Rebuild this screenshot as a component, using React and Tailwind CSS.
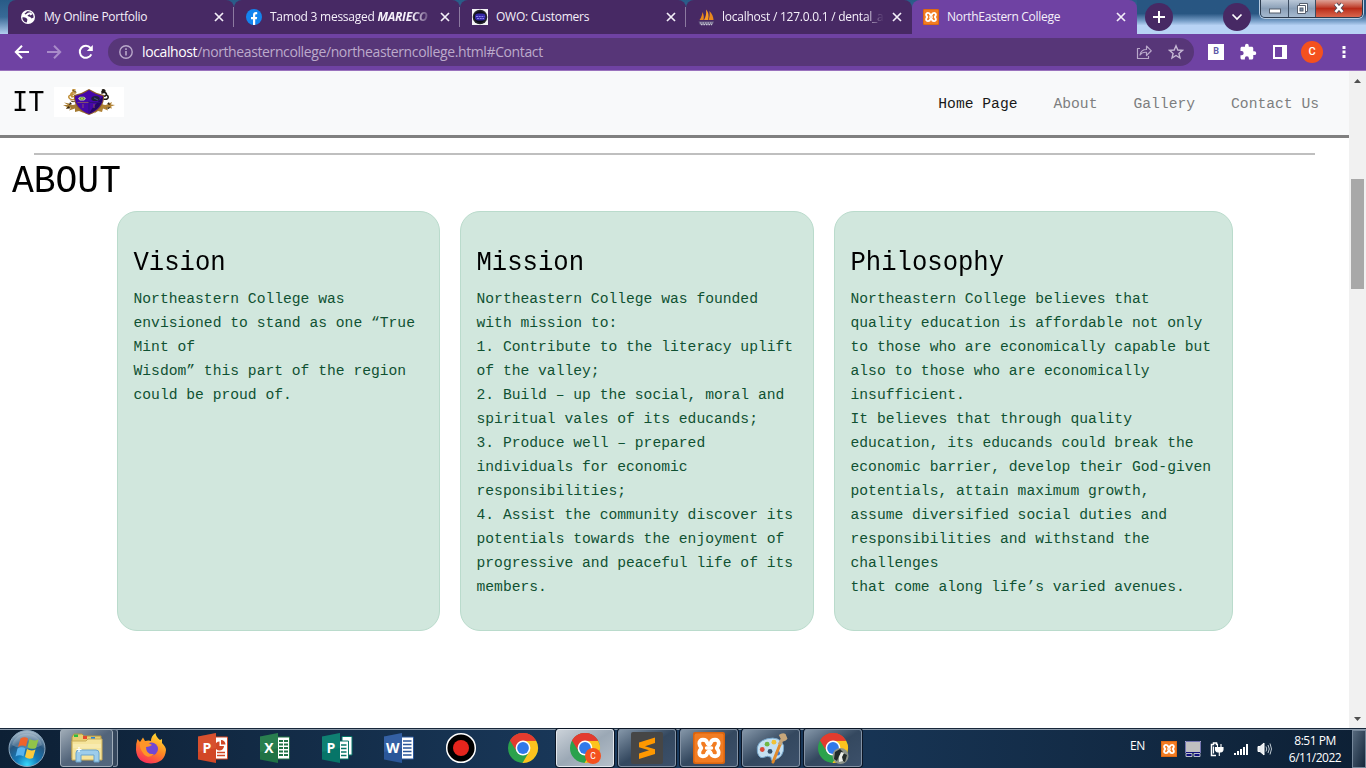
import React from "react";

const ui = "font-['Open_Sans','Noto_Sans',sans-serif]";
const mono = "font-['Liberation_Mono','DejaVu_Sans_Mono',monospace]";

function Xampp({ className, r = 2 }) {
  return (
    <svg viewBox="0 0 32 32" className={className}>
      <rect width="32" height="32" rx={r} fill="#d9640f" />
      <rect x="1.5" y="1.5" width="29" height="29" rx={r} fill="#f27c22" />
      <g fill="none" stroke="#fff" strokeLinejoin="round" strokeLinecap="round">
        <path
          d="M14.500 11.500 C13.500 6.500 6 6.500 6.300 11.500 C6.500 14.500 8.300 15 8.300 16 C8.300 17 6.500 17.500 6.300 20.500 C6 25.500 13.500 25.500 14.500 20.500"
          strokeWidth="3.800"
        />
        <path
          d="M17.500 11.500 C18.500 6.500 26 6.500 25.700 11.500 C25.500 14.500 23.700 15 23.700 16 C23.700 17 25.500 17.500 25.700 20.500 C26 25.500 18.500 25.500 17.500 20.500"
          strokeWidth="3.800"
        />
        <path d="M14.500 11.500 L16 13 L17.500 11.500 M14.500 20.500 L16 19 L17.500 20.500" strokeWidth="3.400" />
        <path d="M13.500 16 H18.500" strokeWidth="3.400" />
      </g>
    </svg>
  );
}

function Chrome({ className, children }) {
  return (
    <svg viewBox="0 0 32 32" className={className}>
      <circle cx="16" cy="16" r="15" fill="#2ba24c" />
      <path d="M16 16 L3 8.500 A15 15 0 0 1 29 8.500 Z" fill="#e33b2e" />
      <path d="M16 8.700 H29.100 A15 15 0 0 1 15.500 31 L22.300 19.600 Z" fill="#fcc31e" />
      <path d="M3 8.500 A15 15 0 0 1 29.100 8.700 H16 L9.700 19.600 Z" fill="#e33b2e" />
      <circle cx="16" cy="16" r="7.400" fill="#fff" />
      <circle cx="16" cy="16" r="5.900" fill="#3079ea" />
      {children}
    </svg>
  );
}

function Globe() {
  return (
    <svg viewBox="0 0 16 16" className="size-4">
      <circle cx="8" cy="8" r="7" fill="#fff" />
      <path d="M2.300 8.500 C5 8 7 9 7.500 11 C6.500 12 7.500 13 6.500 13.600 C4 13 2.300 11 2.300 8.500Z M7 2.400 C9.500 2 11.500 3 12.800 5 L10.500 6.500 L9.500 5.200 L7.500 6.500 C8 8 11 7.500 11.500 9.500 L13.600 8.600 C13.500 7 13.400 6.500 12.800 5 L10.400 3.300 L8 3.800 L5.500 5.500 L4.500 4.700Z" fill="#472964" />
    </svg>
  );
}

function Facebook() {
  return (
    <svg viewBox="0 0 16 16" className="size-4">
      <circle cx="8" cy="8" r="8" fill="#1484ee" />
      <path d="M7 16 V10.200 H5 V7.900 H7 V6.300 C7 4.200 8.200 3.100 10.200 3.100 L11.200 3.200 V5.200 H10.200 C9.500 5.200 9.200 5.600 9.200 6.200 V7.900 H11.200 L10.800 10.200 H9.200 V16Z" fill="#fff" />
    </svg>
  );
}

function Owo() {
  return (
    <svg viewBox="0 0 16 16" className="size-4">
      <rect width="16" height="16" fill="#f4f4f6" />
      <circle cx="8" cy="8" r="7.300" fill="#24242b" />
      <circle cx="8" cy="8" r="5.800" fill="#0c0b18" />
      <rect x="3" y="4.500" width="10.500" height="7" rx="3" fill="#3427a8" />
      <path d="M4 7.500 H12.500 M5 9.500 H12" stroke="#8b80e8" strokeWidth="1" strokeDasharray="2 .7" />
    </svg>
  );
}

function PhpMyAdmin() {
  return (
    <svg viewBox="0 0 17 17" className="size-[17px]">
      <path d="M1.500 11 C3.500 8.500 4.300 5 4.500 3 C6 6 6 8.500 5.500 11Z" fill="#e8871c" />
      <path d="M6 11 C8 8 8.500 4 8 .5 C11 3.500 11 8 10 11Z" fill="#fb9b23" />
      <path d="M10.500 11 C11.700 8 12 5 11.300 2 C14 4.500 15.500 8 15.500 11Z" fill="#e8871c" />
      <path d="M.5 12.500 H16 L14.500 16 H2Z" fill="#6d6387" />
      <path d="M2 14 H15 M3 15.700 H14" stroke="#c9c3d6" strokeWidth="1.200" strokeDasharray="1.500 1" />
    </svg>
  );
}

function Close() {
  return (
    <svg viewBox="0 0 10 10" className="size-[10px] shrink-0">
      <path d="M1 1 L9 9 M9 1 L1 9" stroke="#f3eef8" strokeWidth="1.700" />
    </svg>
  );
}

function Tab({ icon, children, active, sep }) {
  const cls = active
    ? "bg-[#6f42a3] w-[225px] pl-[11px] pr-[11px]"
    : "bg-[#472964] w-[226px] pl-[12px] pr-[10px]";
  return (
    <div className={`flex h-full shrink-0 items-center rounded-t-lg ${cls}`}>
      <span className="flex w-[24px] shrink-0 items-center">{icon}</span>
      <span className={`flex-1 whitespace-nowrap text-[12px] leading-4 text-[#f5f0fa] ${active ? "tracking-[-0.3px]" : "tracking-[-0.25px]"}`}>
        {children}
      </span>
      <span className="ml-[8px] flex"><Close /></span>
      {sep && <span className="-mr-[10px] ml-[9px] h-5 w-px bg-[#8c7aa0]" />}
    </div>
  );
}

function Crest() {
  return (
    <svg viewBox="0 0 70 30" className="h-[30px] w-[70px] bg-white">
      <g fill="none" strokeLinecap="round">
        <path d="M21 9 C17 11 15 7 18.500 5.500 M21.500 6 C18 4.500 18 2 21 3 M21 12 C17 14 13 10.500 15.500 8.500 M20 7 C18 7 17 9 18 10" stroke="#c08f38" strokeWidth="1.500" />
        <path d="M21.500 14 C20 15 18 15 17 14 M22 5 L19 3.500" stroke="#5c4316" strokeWidth="1" />
        <path d="M48 9 C52 10 54 7 51 5.500 M48 6 C52 5 51 2 48.500 3 M49 12 C53 13 55.500 11 53.500 8.500 M48 4.500 L51 4" stroke="#1f1a14" strokeWidth="1.600" />
      </g>
      <path d="M22 17 Q18 19 15 16.500 L10 15.500 L14 18 L9 18 L13 20 L12 22 L17 20.500 L15 23.500 L21 21.500 L21 25 L25 24 L30 26 L24 18Z" fill="#a57a31" />
      <path d="M48 17 Q52 19 55 16.500 L58 15 L57 17.500 L61 18 L57 19.500 L58 21.500 L53 20.500 L54 23.500 L49 21.500 L48 25 L44 24 L40 26.500 L46 18Z" fill="#b08236" />
      <path d="M12 21.500 L15 19 L16 21.500Z M16 15 L18 17 L15 18Z M55 15 L56 18 L53 17Z M52 21 L56 20 L55 22Z" fill="#31230f" />
      <path d="M20 8 Q28 6.500 35 2 Q42 6.500 50 8 Q51 22 35 28 Q19 22 20 8Z" fill="#8b5a2a" />
      <path d="M21 9 Q29 7.500 35 3 Q41 7.500 49 9 Q49.500 21 35 27 Q20.500 21 21 9Z" fill="#4507a8" />
      <path d="M35 27 C42 23 48.500 19 49 9 Q45 14 42 17 Q38 21 35 27Z" fill="#250764" />
      <path d="M23.500 15.500 H35" stroke="#80506b" />
      <path d="M35 14 V26 M35 15.500 H46.500" stroke="#31107c" />
      <path d="M24 11.500 L26 9.700 H30 L32 11.500 L30 13.500 H26Z" fill="#c3c7a7" />
      <ellipse cx="28" cy="11.500" rx="2.500" ry="1.300" fill="#4fa53a" />
      <ellipse cx="28" cy="11.500" rx="1" ry=".7" fill="#d8c043" />
      <ellipse cx="41.500" cy="11.500" rx="4.200" ry="2.600" fill="#201f3b" />
      <path d="M40 11 L44 13" stroke="#46548a" />
      <path d="M29 17 V21 M40 17 V21" stroke="#8c4f67" strokeWidth="1" />
    </svg>
  );
}

function Card({ title, lines, className }) {
  return (
    <section className={`h-[420px] rounded-[20px] border border-[#badbcc] bg-[#d1e7dd] px-[15.500px] pt-[34px] ${className}`}>
      <h2 className="origin-[0_75%] scale-y-[1.07] text-[25.600px] leading-[35px] text-black">{title}</h2>
      <div className="mt-[6px] text-[14.660px] leading-6 text-[#0f5132]">
        {lines.map((l) => (
          <p key={l} className="whitespace-nowrap">{l}</p>
        ))}
      </div>
    </section>
  );
}

const vision = ["Northeastern College was", "envisioned to stand as one “True", "Mint of", "Wisdom” this part of the region", "could be proud of."];
const mission = [
  "Northeastern College was founded", "with mission to:", "1. Contribute to the literacy uplift", "of the valley;",
  "2. Build – up the social, moral and", "spiritual vales of its educands;", "3. Produce well – prepared", "individuals for economic",
  "responsibilities;", "4. Assist the community discover its", "potentials towards the enjoyment of", "progressive and peaceful life of its", "members.",
];
const philosophy = [
  "Northeastern College believes that", "quality education is affordable not only", "to those who are economically capable but",
  "also to those who are economically", "insufficient.", "It believes that through quality", "education, its educands could break the",
  "economic barrier, develop their God-given", "potentials, attain maximum growth,", "assume diversified social duties and",
  "responsibilities and withstand the", "challenges", "that come along life’s varied avenues.",
];

function Office({ color, dark, letter, children }) {
  return (
    <svg viewBox="0 0 32 32" className="size-8">
      {children}
      <path d="M1 4.500 L19 1 V31 L1 27.500Z" fill={color} />
      <path d="M1 4.500 L19 1 V16 L1 20Z" fill={dark} opacity=".25" />
      <text x="9.800" y="21" textAnchor="middle" fontSize="14" fontWeight="700" fontFamily="Open Sans" fill="#fff">{letter}</text>
    </svg>
  );
}

function Slot({ children, state }) {
  const cls =
    state === "active"
      ? "border-[#e3e8ee] bg-linear-to-br from-[#cbd2d9] via-[#9ba8b5] to-[#b5bfc9]"
      : state === "open"
      ? "border-[#8493a5] bg-linear-to-br from-[#8496a8] via-[#34485f] to-[#3c506a]"
      : "border-transparent";
  return (
    <div className="flex w-[62px] shrink-0 justify-center pb-px">
      <div className={`flex w-[58px] items-center justify-center rounded-[3px] border ${cls} ${state ? "shadow-[0_0_0_1px_#0a1525]" : ""}`}>{children}</div>
    </div>
  );
}

function Taskbar() {
  return (
    <footer className="flex h-10 border-t border-[#17273a] bg-linear-to-r from-[#0d2035] via-[#1b3c60] to-[#0d2035] shadow-[inset_0_1px_0_#8b9aaa]">
      <div className="flex w-[58px] shrink-0 items-center pl-[8px]">
        <svg viewBox="0 0 38 38" className="size-[38px]">
          <defs>
            <radialGradient id="orb" cx=".5" cy=".95" r=".9">
              <stop offset="0" stopColor="#36d9fb" /><stop offset=".35" stopColor="#1479b8" /><stop offset=".7" stopColor="#28577f" /><stop offset="1" stopColor="#a0b5c6" />
            </radialGradient>
          </defs>
          <circle cx="19" cy="18.500" r="18" fill="url(#orb)" stroke="#8ba7be" />
          <path d="M4 15 C8 0 30 0 34 15 C25 20 13 20 4 15" fill="#fff" opacity=".2" />
          <path d="M12.500 8.500 Q16.500 6 20 8.500 L18 16.500 Q14 14.500 10 17Z" fill="#ef632b" />
          <path d="M21.500 9 Q26 11.500 30.500 9.500 L28 18 Q24 20 19.500 17.300Z" fill="#91c449" />
          <path d="M9.500 18.500 Q13.500 16 17.500 18.500 L15.500 26.500 Q11.500 24 7.500 26.500Z" fill="#58b3ee" />
          <path d="M19 19 Q23 21.500 27.500 19.500 L25 28 Q21 30 17 27Z" fill="#fcca3d" />
        </svg>
      </div>
      <div className="flex w-[62px] shrink-0 pl-[2px] pb-px">
        <div className="flex w-[53px] items-center justify-center rounded-[3px] border border-[#a3afbb] bg-linear-to-br from-[#a0acb7] via-[#52647a] to-[#53677e]">
          <svg viewBox="0 0 34 32" className="h-8 w-[34px]">
            <path d="M2 5 L4 2 H12 L14 4 H31 V26 H2Z" fill="#e7ce72" stroke="#b49443" />
            <path d="M4 2.500 H8 V5 H4Z" fill="#2fbb42" /><path d="M13 4 H17 V7 H13Z" fill="#e5482e" /><path d="M21 5 H25 V8 H21Z" fill="#2683dc" />
            <path d="M2 9 H16 L18 7 H32 V28 H2Z" fill="#f5e49c" stroke="#c9ac58" />
            <path d="M3 13 H31 M3 15 H31" stroke="#faf0c1" />
            <path d="M6 30 V21 Q6 18 9 18 H26 Q29 18 29 21 V30 H24 V23 H11 V30Z" fill="#9dcdeb" stroke="#6aa3cc" />
            <path d="M9 15 V20 M6.500 17.500 H11.500" stroke="#fff" strokeWidth="1.200" />
          </svg>
        </div>
        <div className="w-[5px] rounded-r-[3px] border border-l-0 border-[#8493a5] bg-[#35475d]" />
      </div>
      <Slot>
        <svg viewBox="0 0 32 32" className="size-8">
          <defs>
            <linearGradient id="fox" x1=".8" y1="0" x2=".3" y2="1"><stop offset="0" stopColor="#ffe536" /><stop offset=".5" stopColor="#ff8a22" /><stop offset="1" stopColor="#f92b5b" /></linearGradient>
          </defs>
          <path d="M2.500 7 L5 10 L8 5.500 L10 9 Q14 8 16 9 Q16 4 20.500 1 Q21 5 25 8 L27 7 L27 11 Q31 15 31 18 Q30 31 16 31.500 Q2 31 1 18 Q.5 12 2.500 7Z" fill="url(#fox)" />
          <circle cx="16.500" cy="17" r="6.500" fill="#7148d4" />
          <path d="M5 10 Q11 8 17 13 Q14 15 11 15 Q11 23 19 22 Q13 28 8 21 Q4 16 5 10Z" fill="#ff9528" />
        </svg>
      </Slot>
      <Slot>
        <Office color="#d24726" dark="#e86a48" letter="P">
          <path d="M18 5 H30.500 V27 H18Z" fill="#fff" stroke="#d24726" />
          <path d="M20 20.500 H28 M20 23.500 H28" stroke="#d24726" strokeWidth="1.500" />
          <path d="M22.500 9.500 V14 H27 A4.500 4.500 0 1 1 22.500 9.500Z M24 8 A4.500 4.500 0 0 1 28.500 12.500 H24Z" fill="#d24726" />
        </Office>
      </Slot>
      <Slot>
        <Office color="#207245" dark="#45a36f" letter="X">
          <path d="M18 5 H30.500 V27 H18Z" fill="#fff" stroke="#207245" />
          <path d="M20 9 H29 M20 12.500 H29 M20 16 H29 M20 19.500 H29 M20 23 H29" stroke="#207245" strokeWidth="2" />
          <path d="M24.500 7 V25" stroke="#fff" />
        </Office>
      </Slot>
      <Slot>
        <Office color="#077568" dark="#29a390" letter="P">
          <path d="M21 4.500 H31 V23 H21Z" fill="#fff" stroke="#077568" />
          <path d="M18 9 H27.500 V27 H18Z" fill="#fff" stroke="#077568" />
          <path d="M20 13 H25.500 M20 16.500 H25.500 M20 20 H25.500 M20 23.500 H25.500" stroke="#077568" strokeWidth="1.500" />
        </Office>
      </Slot>
      <Slot>
        <Office color="#2a5699" dark="#5281c6" letter="W">
          <path d="M18 5 H30.500 V27 H18Z" fill="#fff" stroke="#2a5699" />
          <path d="M20 9 H28.500 M20 12.500 H28.500 M20 16 H28.500 M20 19.500 H28.500 M20 23 H28.500" stroke="#2a5699" strokeWidth="1.400" />
        </Office>
      </Slot>
      <Slot>
        <svg viewBox="0 0 32 32" className="size-8"><circle cx="16" cy="16" r="14.300" fill="#000" stroke="#fff" strokeWidth="1.500" /><circle cx="16" cy="16" r="8" fill="#e5251d" /></svg>
      </Slot>
      <Slot><Chrome className="size-8" /></Slot>
      <Slot state="active">
        <Chrome className="size-8 overflow-visible">
          <circle cx="24" cy="24" r="8" fill="#f4511e" />
          <text x="24" y="27" textAnchor="middle" fontSize="8.500" fontFamily="Roboto" fill="#fff">C</text>
        </Chrome>
      </Slot>
      <Slot state="open">
        <svg viewBox="0 0 32 32" className="size-8"><rect width="32" height="32" rx="2" fill="#464646" /><path d="M8 10.500 L24 5.500 V11 L14 14.200 L24 17.200 V22 L8 27 V21.500 L18 18.200 L8 15.200Z" fill="#ff9800" /></svg>
      </Slot>
      <Slot state="open"><Xampp className="size-8" /></Slot>
      <Slot state="open">
        <svg viewBox="0 0 34 34" className="h-[33px] w-[34px]">
          <path d="M3 21 Q1 10 13 7 Q26 4 30 14 Q31 26 20 29 Q17 31 17 26 Q13 24 10 26 Q5 28 3 21Z" fill="#c4e0f2" stroke="#77a6ca" />
          <circle cx="16" cy="20" r="2.500" fill="#35506b" />
          <circle cx="8" cy="18" r="2.500" fill="#dc4a3a" /><circle cx="13" cy="12.500" r="2.500" fill="#71b643" /><circle cx="20" cy="10.500" r="2.500" fill="#f0c236" /><circle cx="24" cy="22" r="2.300" fill="#3d7ad0" />
          <path d="M27 11 L19 31" stroke="#e18a2b" strokeWidth="3" strokeLinecap="round" />
          <path d="M25 3 Q29 0 32 2 L34 7 Q33 9 29 10 L28 14 L24 12 L27 7Z" fill="#c6a67a" />
        </svg>
      </Slot>
      <Slot state="open">
        <Chrome className="size-8 overflow-visible">
          <circle cx="23.500" cy="24" r="8" fill="#8e948a" />
          <path d="M18 20 L23 17 L26 20 L22 24 L20 29 L17 27Z M26 21 L30 23 L28 30 L24 28Z" fill="#222a29" />
          <path d="M24 20 L27 21 L25 25 L26 29 L22 30 L22 25Z" fill="#eceee8" />
        </Chrome>
      </Slot>
      <div className="ml-auto flex items-center">
        <span className="mr-[16px] -mt-[5px] text-[12px] tracking-[-0.3px] text-white">EN</span>
        <div className="flex items-center gap-2">
          <Xampp className="size-4" r={0} />
          <svg viewBox="0 0 16 16" className="size-4"><rect x=".5" y=".5" width="15" height="11" fill="#c0c0c0" stroke="#10107c" /><path d="M0 .5 H16 M.5 0 V12 M15.500 0 V12" stroke="#d9dbe6" strokeWidth=".5" /><path d="M1 12.500 H7 V15.500 H1Z M9 12.500 H15 V15.500 H9Z" fill="#10107c" stroke="#b9bdcc" /></svg>
          <svg viewBox="0 0 16 16" className="size-4"><path d="M7 14.500 H2.500 V3.500 H4.500 V2 H7.500 V3.500 H9" fill="none" stroke="#fff" strokeWidth="1.500" /><path d="M4.500 5.500 V12.500" stroke="#fff" strokeWidth="1.200" /><path d="M6.500 6.500 H14 V8.500 Q14 10.500 11.500 11 H9 Q6.500 10.500 6.500 8.500Z M8.500 3 V6 M12 3 V6 M10.300 11 V15" fill="#fff" stroke="#fff" strokeWidth="1.100" /></svg>
          <svg viewBox="0 0 16 16" className="size-4"><path d="M1 12 H3 V14 H1Z M4 10 H6 V14 H4Z M7 8 H9 V14 H7Z M10 6 H12 V14 H10Z M13 3 H15 V14 H13Z" fill="#fff" /></svg>
          <svg viewBox="0 0 16 16" className="size-4"><path d="M1 5.500 H3 L7 2 V14 L3 10.500 H1Z" fill="#e8edf1" stroke="#fff" /><path d="M9 5.500 Q10.500 8 9 10.500 M11 4 Q13.500 8 11 12 M13 2.500 Q16 8 13 13.500" fill="none" stroke="#d4dce3" strokeWidth=".9" /></svg>
        </div>
        <div className="ml-[9px] w-[66px] text-center text-[12px] leading-[17px] tracking-[-0.5px] text-white">
          <div>8:51 PM</div>
          <div>6/11/2022</div>
        </div>
        <div className="ml-[4px] h-[38px] w-[14px] border border-[#75879a] bg-linear-to-br from-[#56697d] to-[#15273b]" />
      </div>
    </footer>
  );
}

export default function App() {
  return (
    <div className={`flex h-[768px] w-[1366px] flex-col overflow-hidden bg-white ${ui}`}>
      <div className="flex h-[34px] shrink-0 bg-linear-to-b from-[#285b87] via-[#386a97] to-[#b2cef0] pl-[8px]">
        <Tab sep icon={<Globe />}>My Online Portfolio</Tab>
        <Tab sep icon={<Facebook />}>
          <span className="block mask-r-from-88%">Tamod 3 messaged <b className="italic">MARIECO</b></span>
        </Tab>
        <Tab sep icon={<Owo />}>OWO: Customers</Tab>
        <Tab icon={<PhpMyAdmin />}>
          <span className="block mask-r-from-88%">localhost / 127.0.0.1 / dental_a</span>
        </Tab>
        <Tab active icon={<Xampp className="size-4" />}>NorthEastern College</Tab>
        <div className="flex flex-1 items-center bg-linear-to-b from-[#285682] from-40% via-[#7199c3] via-60% to-[#b8d3f5] to-75% pl-[8px]">
          <span className="flex size-7 items-center justify-center rounded-full bg-[#472964]">
            <svg viewBox="0 0 14 14" className="size-[14px]"><path d="M7 1 V13 M1 7 H13" stroke="#fff" strokeWidth="2" /></svg>
          </span>
          <span className="ml-[50px] flex size-7 items-center justify-center rounded-full bg-[#472964]">
            <svg viewBox="0 0 12 12" className="size-3"><path d="M1.500 3.500 L6 8 L10.500 3.500" fill="none" stroke="#fff" strokeWidth="1.700" /></svg>
          </span>
          <div className="ml-[9px] flex h-[18px] w-[103px] self-start overflow-hidden rounded-b-[5px] border border-t-0 border-[#2c3b4e] shadow-[0_0_0_1px_#b6cbe0]">
            <span className="flex w-[28px] items-center justify-center border-r border-[#3c4d62] bg-linear-to-b from-[#bac8d8] via-[#8a9fb7] via-50% to-[#a6bad0]">
              <svg viewBox="0 0 14 14" className="mt-[2px] size-[14px]"><rect x="1.500" y="6" width="11" height="4" fill="#fff" stroke="#555e6c" /></svg>
            </span>
            <span className="flex w-[27px] items-center justify-center border-r border-[#3c4d62] bg-linear-to-b from-[#bac8d8] via-[#8a9fb7] via-50% to-[#a6bad0]">
              <svg viewBox="0 0 14 14" className="-mt-[2px] size-[14px]"><path d="M4.500 2.500 H12.500 V10.500 H4.500Z" fill="#fff" stroke="#555e6c" /><path d="M2.500 4.500 H10.500 V12.500 H2.500Z" fill="#fff" stroke="#555e6c" /><rect x="5" y="7" width="3" height="3" fill="#7d93ad" stroke="#555e6c" /></svg>
            </span>
            <span className="flex flex-1 items-center justify-center bg-linear-to-b from-[#dda095] via-[#b92b18] via-50% to-[#d9654d]">
              <svg viewBox="0 0 14 12" className="-mt-[2px] h-3 w-[14px]"><path d="M3.500 2 L10.500 10 M10.500 2 L3.500 10" stroke="#554a55" strokeWidth="4.200" /><path d="M3.500 2 L10.500 10 M10.500 2 L3.500 10" stroke="#fff" strokeWidth="2.600" /></svg>
            </span>
          </div>
        </div>
      </div>

      <div className="flex h-[37px] shrink-0 items-center border-b border-[#9a72bd] bg-[#6f42a3] pl-[14px]">
        <svg viewBox="0 0 16 16" className="size-4"><path d="M15 8 H2 M8 1.800 L1.800 8 L8 14.200" fill="none" stroke="#fff" strokeWidth="2" /></svg>
        <svg viewBox="0 0 16 16" className="ml-4 size-4"><path d="M1 8 H14 M8 1.800 L14.200 8 L8 14.200" fill="none" stroke="#a98bc9" strokeWidth="2" /></svg>
        <svg viewBox="0 0 16 16" className="ml-4 size-4"><path d="M13.300 10.300 A6 6 0 1 1 12.500 4" fill="none" stroke="#fff" strokeWidth="2" /><path d="M14.800 1 V7 H8.800Z" fill="#fff" /></svg>
        <div className="ml-[14px] flex h-7 w-[1086px] items-center rounded-full bg-[#573678] pl-[11px] pr-[10px]">
          <svg viewBox="0 0 14 14" className="size-[14px]"><circle cx="7" cy="7" r="6.200" fill="none" stroke="#b9a8ca" strokeWidth="1.400" /><path d="M7 6 V10.500 M7 3.300 V4.900" stroke="#b9a8ca" strokeWidth="1.600" /></svg>
          <span className="ml-[9px] text-[14px] leading-5 tracking-[-0.385px] text-[#bcaacb]"><span className="text-white">localhost</span>/northeasterncollege/northeasterncollege.html#Contact</span>
          <svg viewBox="0 0 16 16" className="ml-auto size-4"><path d="M4 4.500 H1.500 V14.500 H12.500 V12 M4 11 Q5 5.500 10.500 5.500 V2 L15.300 6.800 L10.500 11.500 V8.300 Q6 8 4 11Z" fill="none" stroke="#b9a8ca" strokeWidth="1.200" strokeLinejoin="round" /></svg>
          <svg viewBox="0 0 16 16" className="ml-4 size-4"><path d="M8 1.800 L9.800 6 L14.500 6.400 L10.900 9.400 L12 14 L8 11.500 L4 14 L5.100 9.400 L1.500 6.400 L6.200 6Z" fill="none" stroke="#c6b8d4" strokeWidth="1.400" /></svg>
        </div>
        <span className="ml-[14px] flex size-4 items-center justify-center bg-white font-['Roboto',sans-serif] text-[9px] font-bold text-[#5f5aa8]">B</span>
        <svg viewBox="0 0 24 24" className="ml-[15px] size-[18px]"><path d="M20.500 11H19V7c0-1.100-.9-2-2-2h-4V3.500a2.500 2.500 0 0 0-5 0V5H4c-1.100 0-2 .9-2 2v3.800h1.500a2.700 2.700 0 0 1 0 5.400H2V20c0 1.100.9 2 2 2h3.800v-1.500a2.700 2.700 0 0 1 5.400 0V22H17c1.100 0 2-.9 2-2v-4h1.500a2.500 2.500 0 0 0 0-5z" fill="#fff" /></svg>
        <svg viewBox="0 0 14 14" className="ml-[16px] size-[14px]"><path d="M1 1 H13 V13 H1Z" fill="none" stroke="#fff" strokeWidth="2" /><path d="M9 0 H14 V14 H9Z" fill="#fff" /></svg>
        <span className="ml-[14px] flex size-[22px] items-center justify-center rounded-full bg-[#f4511e] font-['Roboto',sans-serif] text-[11px] font-medium text-white">C</span>
        <svg viewBox="0 0 4 14" className="ml-[19px] h-[14px] w-1"><path d="M.5 1 H3.500 V4 H.5Z M.5 5.500 H3.500 V8.500 H.5Z M.5 10 H3.500 V13 H.5Z" fill="#fff" /></svg>
      </div>

      <div className="flex h-[657px] shrink-0">
        <main className={`w-[1349px] ${mono}`}>
          <nav className="flex h-[67px] items-center border-b-[3px] border-[#808080] bg-[#f8f9fa] pl-[12px] pr-[30px]">
            <span className="mt-[2px] origin-[0_75%] scale-y-[1.1] text-[27px] leading-8 text-black">IT</span>
            <span className="ml-[10px] mt-[-3px] flex"><Crest /></span>
            <div className="ml-auto mt-[3px] flex gap-[36px] text-[14.660px] text-[#7d7e7f]">
              <a className="text-[#191919]">Home Page</a>
              <a>About</a>
              <a>Gallery</a>
              <a>Contact Us</a>
            </div>
          </nav>
          <hr className="ml-[34px] mr-[34px] mt-[15px] h-[2px] border-0 bg-[#bfbfbf]" />
          <h1 className="mt-[4px] origin-[0_75%] scale-y-[1.08] pl-[12px] text-[36.300px] leading-[48px] text-black">ABOUT</h1>
          <div className="mt-[4px] flex gap-5 pl-[117px]">
            <Card title="Vision" lines={vision} className="w-[323px]" />
            <Card title="Mission" lines={mission} className="w-[354px]" />
            <Card title="Philosophy" lines={philosophy} className="w-[399px]" />
          </div>
        </main>
        <aside className="flex w-[17px] flex-col items-center bg-[#f1f1f1]">
          <svg viewBox="0 0 7 4" className="mt-[8px] h-1 w-[7px]"><path d="M0 4 L3.500 0 L7 4Z" fill="#505050" /></svg>
          <div className="mt-[96px] h-[110px] w-[13px] bg-[#a8a8a8]" />
          <svg viewBox="0 0 7 4" className="mb-[7px] mt-auto h-1 w-[7px]"><path d="M0 0 L3.500 4 L7 0Z" fill="#505050" /></svg>
        </aside>
      </div>
      <Taskbar />
    </div>
  );
}
